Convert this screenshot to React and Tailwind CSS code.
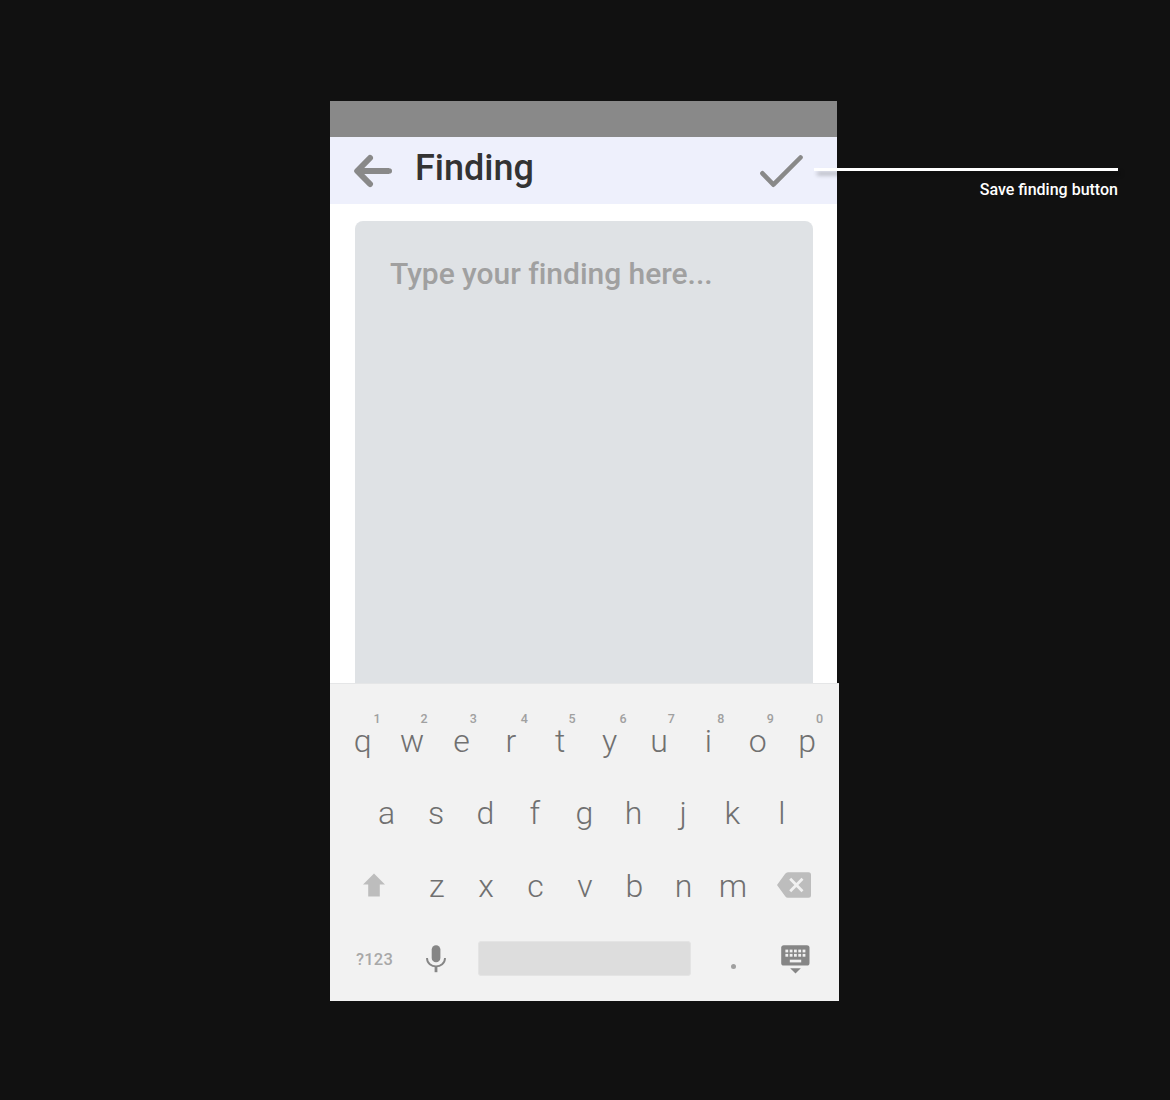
const topRow = [
  ['q', '1', 'left-[35.5px]'],
  ['w', '2', 'left-[33px]'],
  ['e', '3', 'left-[33px]'],
  ['r', '4', 'left-[34.5px]'],
  ['t', '5', 'left-[33px]'],
  ['y', '6', 'left-[34.5px]'],
  ['u', '7', 'left-[33.5px]'],
  ['i', '8', 'left-[33.5px]'],
  ['o', '9', 'left-[33.5px]'],
  ['p', '0', 'left-[33.5px]'],
];
const middleRow = ['a', 's', 'd', 'f', 'g', 'h', 'j', 'k', 'l'];
const bottomRow = ['z', 'x', 'c', 'v', 'b', 'n', 'm'];

function Key({ label, hint, hintClass }) {
  return (
    <button className="relative h-[72px] w-[49.4px] text-center text-[32px] leading-[72px] font-light text-[#707070]">
      {label}
      {hint && (
        <span className={`absolute top-[6px] text-[12.5px] leading-4 font-medium text-[#a0a0a0] ${hintClass}`}>
          {hint}
        </span>
      )}
    </button>
  );
}

function BackArrow() {
  return (
    <svg className="h-[34px] w-[40px]" viewBox="0 0 40 34" fill="none" stroke="#898989" strokeWidth="6" strokeLinecap="round" strokeLinejoin="round">
      <path d="M17 4 L4.2 17 L17 30" />
      <path d="M5 17 H36" strokeLinecap="butt" />
      <path d="M34 17 H36.2" strokeWidth="5.6" />
    </svg>
  );
}

function Check() {
  return (
    <svg className="h-[34px] w-[46px]" viewBox="0 0 46 34" fill="none" stroke="#898989" strokeWidth="4.6" strokeLinecap="round" strokeLinejoin="round">
      <path d="M4.4 19.3 L15.4 30.7 L42.5 3.5" />
    </svg>
  );
}

function Shift() {
  return (
    <svg className="h-6 w-[22px]" viewBox="0 0 22 24" fill="#bdbdbd">
      <path d="M11 0.5 L22 11.5 H16.8 V23.5 H5.2 V11.5 H0 Z" />
    </svg>
  );
}

function Backspace() {
  return (
    <svg className="h-[26px] w-[34px]" viewBox="0 0 34 26">
      <path d="M8.2 1.8 Q9.2 0.3 11 0.3 H31.5 Q34 0.3 34 2.8 V23.3 Q34 25.8 31.5 25.8 H11 Q9.2 25.8 8.2 24.3 L0 13 Z" fill="#bdbdbd" />
      <path d="M13.2 6.8 L25.5 19.2 M25.5 6.8 L13.2 19.2" stroke="#f1f1f1" strokeWidth="2.8" />
    </svg>
  );
}

function Mic() {
  return (
    <svg className="h-7 w-5" viewBox="0 0 20 28">
      <rect x="5.7" y="0.3" width="8.7" height="17" rx="4.3" fill="#868686" />
      <path d="M1 13 C1 24.2 19 24.2 19 13" fill="none" stroke="#868686" strokeWidth="1.9" />
      <path d="M10 21 V27.2" stroke="#868686" strokeWidth="2.8" />
    </svg>
  );
}

function HideKeyboard() {
  const cols = [4.4, 8.7, 13, 17.3, 21.6];
  return (
    <svg className="h-[29px] w-[29px]" viewBox="0 0 29 29">
      <rect x="0.2" y="0.2" width="28.3" height="20.4" rx="2.6" fill="#868686" />
      {cols.map((x) => (
        <g key={x} fill="#f1f1f1">
          <rect x={x} y="4.6" width="2.8" height="2.8" />
          <rect x={x} y="8.9" width="2.8" height="2.8" />
        </g>
      ))}
      <rect x="8.8" y="14.7" width="11.4" height="2.7" fill="#f1f1f1" />
      <path d="M9.2 23.3 H19.8 L14.5 28.6 Z" fill="#868686" />
    </svg>
  );
}

export default function App() {
  return (
    <div className="h-[1100px] w-[1170px] overflow-hidden bg-[#111111] pt-[101px] pl-[330px] font-['Roboto',sans-serif]">
      <main className="flex h-[900px] w-[509px] flex-col">
        <div className="h-9 w-[507px] shrink-0 bg-[#898989]" />
        <header className="relative flex h-[67px] w-[507px] shrink-0 items-center bg-[#eef0fc] pr-[33px] pl-[23px]">
          <BackArrow />
          <h1 className="mb-[5px] ml-[22px] text-[36px] leading-10 font-medium text-[#333333]">Finding</h1>
          <div className="ml-auto">
            <Check />
          </div>
          <aside className="absolute top-[31px] left-[484px] w-[304px]">
            <div className="h-[3px] bg-white shadow-[3px_4px_4px_rgba(0,0,0,0.3)]" />
            <p className="mt-[9px] text-right text-base leading-5 font-medium text-white">Save finding button</p>
          </aside>
        </header>
        <section className="h-[479px] w-[507px] shrink-0 bg-white pt-[17px] pr-[24px] pl-[25px]">
          <div className="h-full rounded-t-lg bg-[#dfe2e5] px-[35px] pt-[33px] text-[30px] leading-10 font-medium tracking-[-0.03px] text-[#a0a0a0]">
            Type your finding here...
          </div>
        </section>
        <section className="h-[318px] w-[509px] shrink-0 border-t border-[#e5e6e7] bg-[#f2f2f2] pt-[21px]">
          <div className="flex pl-2">
            {topRow.map(([k, n, pos]) => (
              <Key key={k} label={k} hint={n} hintClass={pos} />
            ))}
          </div>
          <div className="flex pl-[32px]">
            {middleRow.map((k) => (
              <Key key={k} label={k} />
            ))}
          </div>
          <div className="mt-px flex items-center pl-[33px]">
            <div className="mb-[2px]">
              <Shift />
            </div>
            <div className="ml-[27px] flex">
              {bottomRow.map((k) => (
                <Key key={k} label={k} />
              ))}
            </div>
            <div className="mb-[2px] ml-[19px]">
              <Backspace />
            </div>
          </div>
          <div className="mt-[19px] flex h-[35px] items-center">
            <span className="mt-0.5 ml-[26px] w-[70px] text-[16.5px] leading-5 font-medium tracking-[0.2px] text-[#a8a8a8]">?123</span>
            <Mic />
            <div className="ml-8 h-[35px] w-[213px] rounded-[3px] border border-[#e4e4e4] bg-[#dddddd]" />
            <span className="mt-4 ml-[40px] size-[5px] rounded-full bg-[#a0a0a0]" />
            <div className="mt-px ml-[45px]">
              <HideKeyboard />
            </div>
          </div>
        </section>
      </main>
    </div>
  );
}
